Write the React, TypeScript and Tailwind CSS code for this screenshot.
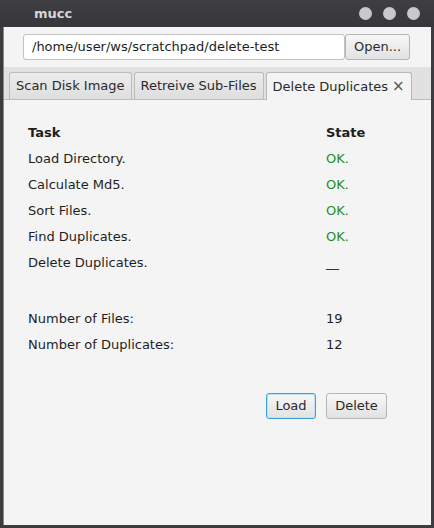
const font = { fontFamily: '"DejaVu Sans", Verdana, sans-serif' };

const tasks = [
  { name: "Load Directory.", state: "OK." },
  { name: "Calculate Md5.", state: "OK." },
  { name: "Sort Files.", state: "OK." },
  { name: "Find Duplicates.", state: "OK." },
  { name: "Delete Duplicates.", state: "__" },
];

function Tab({ label, active, closable }: { label: string; active?: boolean; closable?: boolean }) {
  return (
    <div
      className={
        "h-[27px] flex items-center px-[6px] border border-b-0 rounded-t-[3px] text-[13px] text-[#2a2a2a] " +
        (active
          ? "bg-[#f4f4f4] border-[#b8b8b8] h-[28px] -mb-px"
          : "bg-gradient-to-b from-[#ececec] to-[#dedede] border-[#bcbcbc]")
      }
    >
      <span>{label}</span>
      {closable ? <span className="ml-[4px] text-[#555] text-[15px] leading-none">×</span> : null}
    </div>
  );
}

export default function App() {
  return (
    <div className="w-[434px] h-[528px] bg-[#3c3b40] flex flex-col" style={font}>
      <div className="h-[27px] flex items-center bg-gradient-to-b from-[#3f3e43] to-[#37363b]">
        <span className="ml-[34px] text-[13px] font-bold text-[#d6d6d6]">mucc</span>
        <div className="ml-auto mr-[14px] flex gap-[11px]">
          <div className="w-[13px] h-[13px] rounded-full bg-[#c9c9c9]" />
          <div className="w-[13px] h-[13px] rounded-full bg-[#c9c9c9]" />
          <div className="w-[13px] h-[13px] rounded-full bg-[#c9c9c9]" />
        </div>
      </div>

      <div className="flex-1 mx-[3px] mb-[3px] bg-[#f4f4f4] flex flex-col border-l border-[#8a8a8a]">
        <div className="flex pt-[7px] pl-[19px]">
          <div className="w-[322px] h-[26px] bg-white border border-[#c2c2c2] rounded-[3px] flex items-center px-[8px] text-[13px] text-[#1e1e1e]">
            /home/user/ws/scratchpad/delete-test
          </div>
          <button className="w-[65px] h-[26px] border border-[#b5b5b5] rounded-[3px] bg-gradient-to-b from-[#f7f7f7] to-[#e2e2e2] text-[13px] text-[#2a2a2a]">
            Open...
          </button>
        </div>

        <div className="mt-[7px] h-[33px] bg-[#e1e1e1] border-b border-[#bdbdbd] flex items-end pl-[5px] gap-[2px]">
          <Tab label="Scan Disk Image" />
          <Tab label="Retreive Sub-Files" />
          <Tab label="Delete Duplicates" active closable />
        </div>

        <div className="pt-[20px] pl-[24px] text-[13px] text-[#1e1e1e]">
          <div className="flex h-[26px] items-center font-bold">
            <span className="w-[298px]">Task</span>
            <span>State</span>
          </div>
          {tasks.map((t) => (
            <div key={t.name} className="flex h-[26px] items-center">
              <span className="w-[298px]">{t.name}</span>
              <span className={t.state === "OK." ? "text-[#1f8f1f]" : "text-[#1e1e1e]"}>{t.state}</span>
            </div>
          ))}

          <div className="mt-[30px]">
            <div className="flex h-[26px] items-center">
              <span className="w-[298px]">Number of Files:</span>
              <span>19</span>
            </div>
            <div className="flex h-[26px] items-center">
              <span className="w-[298px]">Number of Duplicates:</span>
              <span>12</span>
            </div>
          </div>
        </div>

        <div className="mt-[35px] flex justify-end gap-[10px] pr-[44px]">
          <button className="w-[50px] h-[26px] rounded-[3px] border border-[#3aa1d6] shadow-[inset_0_0_0_1px_#bfe3f5] bg-gradient-to-b from-[#f7f7f7] to-[#e2e2e2] text-[13px] text-[#2a2a2a]">
            Load
          </button>
          <button className="w-[61px] h-[26px] rounded-[3px] border border-[#b5b5b5] bg-gradient-to-b from-[#f7f7f7] to-[#e2e2e2] text-[13px] text-[#2a2a2a]">
            Delete
          </button>
        </div>
      </div>
    </div>
  );
}
